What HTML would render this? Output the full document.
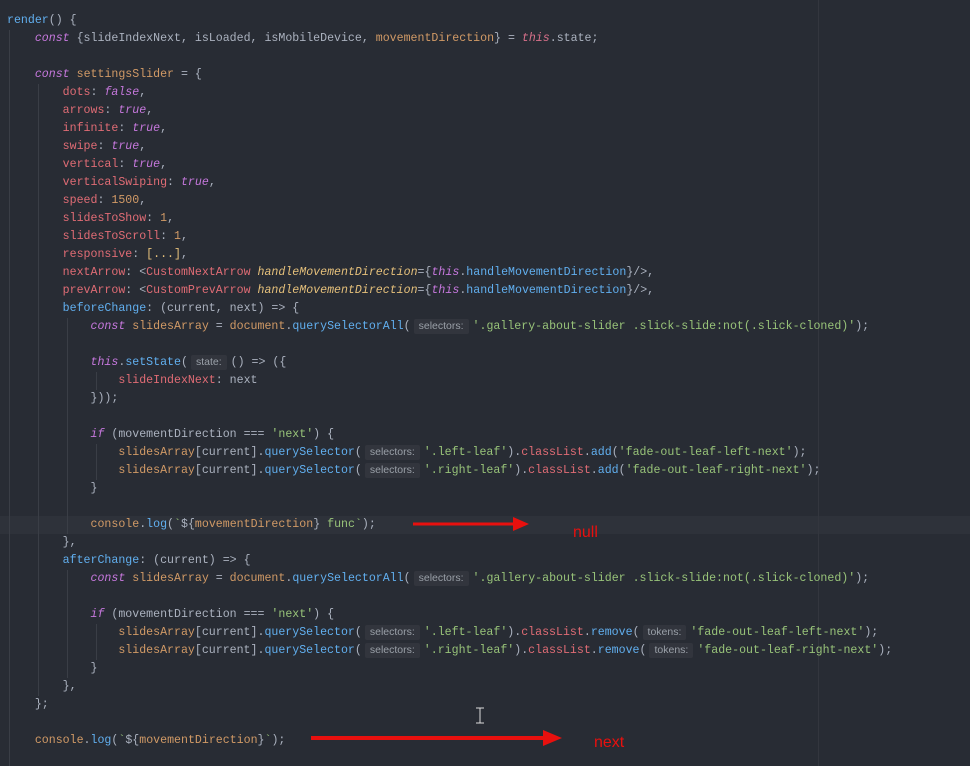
<!DOCTYPE html>
<html><head><meta charset="utf-8"><style>
html,body{margin:0;padding:0;}
body{width:970px;height:766px;background:#282c34;overflow:hidden;position:relative;font-family:"Liberation Mono",monospace;font-size:11.6px;color:#abb2bf;}
.l{position:absolute;left:7px;height:18px;line-height:18px;white-space:pre;}
.k{color:#c678dd;font-style:italic}
.p{color:#e06c75}
.v{color:#d19a66}
.f{color:#61afef}
.s{color:#98c379}
.n{color:#d19a66}
.y{color:#e5c07b}
.a{color:#e5c07b;font-style:italic}
.h{display:inline-block;font-family:"Liberation Sans",sans-serif;font-size:10.5px;color:#9aa0a8;background:#32353d;padding:0 5px;margin:0 4px 0 3px;line-height:15px;border-radius:2px;}
.g{position:absolute;width:1px;background:#3a3e46;}
</style></head><body>
<div style="position:absolute;left:0;top:516px;width:970px;height:18px;background:#2e323a"></div>
<div class="g" style="left:818px;top:0;height:766px;background:#33363e"></div>
<div class="g" style="left:9px;top:30px;height:736px"></div>
<div class="g" style="left:38px;top:84px;height:612px"></div>
<div class="g" style="left:67px;top:318px;height:216px"></div>
<div class="g" style="left:96px;top:372px;height:18px"></div>
<div class="g" style="left:96px;top:444px;height:36px"></div>
<div class="g" style="left:67px;top:570px;height:108px"></div>
<div class="g" style="left:96px;top:624px;height:36px"></div>

<div class="l" style="top:12px"><span class="f">render</span>() {</div>
<div class="l" style="top:30px">    <span class="k">const</span> {slideIndexNext, isLoaded, isMobileDevice, <span class="v">movementDirection</span>} = <span class="k" style="color:#d8708a">this</span>.state;</div>
<div class="l" style="top:66px">    <span class="k">const</span> <span class="v">settingsSlider</span> = {</div>
<div class="l" style="top:84px">        <span class="p">dots</span>: <span class="k">false</span>,</div>
<div class="l" style="top:102px">        <span class="p">arrows</span>: <span class="k">true</span>,</div>
<div class="l" style="top:120px">        <span class="p">infinite</span>: <span class="k">true</span>,</div>
<div class="l" style="top:138px">        <span class="p">swipe</span>: <span class="k">true</span>,</div>
<div class="l" style="top:156px">        <span class="p">vertical</span>: <span class="k">true</span>,</div>
<div class="l" style="top:174px">        <span class="p">verticalSwiping</span>: <span class="k">true</span>,</div>
<div class="l" style="top:192px">        <span class="p">speed</span>: <span class="n">1500</span>,</div>
<div class="l" style="top:210px">        <span class="p">slidesToShow</span>: <span class="n">1</span>,</div>
<div class="l" style="top:228px">        <span class="p">slidesToScroll</span>: <span class="n">1</span>,</div>
<div class="l" style="top:246px">        <span class="p">responsive</span>: <span class="y">[...]</span>,</div>
<div class="l" style="top:264px">        <span class="p">nextArrow</span>: &lt;<span class="p">CustomNextArrow</span> <span class="a">handleMovementDirection</span>={<span class="k">this</span>.<span class="f">handleMovementDirection</span>}/&gt;,</div>
<div class="l" style="top:282px">        <span class="p">prevArrow</span>: &lt;<span class="p">CustomPrevArrow</span> <span class="a">handleMovementDirection</span>={<span class="k">this</span>.<span class="f">handleMovementDirection</span>}/&gt;,</div>
<div class="l" style="top:300px">        <span class="f">beforeChange</span>: (current, next) =&gt; {</div>
<div class="l" style="top:318px">            <span class="k">const</span> <span class="v">slidesArray</span> = <span class="v">document</span>.<span class="f">querySelectorAll</span>(<span class="h">selectors:</span><span class="s">'.gallery-about-slider .slick-slide:not(.slick-cloned)'</span>);</div>
<div class="l" style="top:354px">            <span class="k">this</span>.<span class="f">setState</span>(<span class="h">state:</span>() =&gt; ({</div>
<div class="l" style="top:372px">                <span class="p">slideIndexNext</span>: next</div>
<div class="l" style="top:390px">            }));</div>
<div class="l" style="top:426px">            <span class="k">if</span> (movementDirection === <span class="s">'next'</span>) {</div>
<div class="l" style="top:444px">                <span class="v">slidesArray</span>[current].<span class="f">querySelector</span>(<span class="h">selectors:</span><span class="s">'.left-leaf'</span>).<span class="p">classList</span>.<span class="f">add</span>(<span class="s">'fade-out-leaf-left-next'</span>);</div>
<div class="l" style="top:462px">                <span class="v">slidesArray</span>[current].<span class="f">querySelector</span>(<span class="h">selectors:</span><span class="s">'.right-leaf'</span>).<span class="p">classList</span>.<span class="f">add</span>(<span class="s">'fade-out-leaf-right-next'</span>);</div>
<div class="l" style="top:480px">            }</div>
<div class="l" style="top:516px">            <span class="v">console</span>.<span class="f">log</span>(<span class="s">`</span>${<span class="v">movementDirection</span>}<span class="s"> func`</span>);</div>
<div class="l" style="top:534px">        },</div>
<div class="l" style="top:552px">        <span class="f">afterChange</span>: (current) =&gt; {</div>
<div class="l" style="top:570px">            <span class="k">const</span> <span class="v">slidesArray</span> = <span class="v">document</span>.<span class="f">querySelectorAll</span>(<span class="h">selectors:</span><span class="s">'.gallery-about-slider .slick-slide:not(.slick-cloned)'</span>);</div>
<div class="l" style="top:606px">            <span class="k">if</span> (movementDirection === <span class="s">'next'</span>) {</div>
<div class="l" style="top:624px">                <span class="v">slidesArray</span>[current].<span class="f">querySelector</span>(<span class="h">selectors:</span><span class="s">'.left-leaf'</span>).<span class="p">classList</span>.<span class="f">remove</span>(<span class="h">tokens:</span><span class="s">'fade-out-leaf-left-next'</span>);</div>
<div class="l" style="top:642px">                <span class="v">slidesArray</span>[current].<span class="f">querySelector</span>(<span class="h">selectors:</span><span class="s">'.right-leaf'</span>).<span class="p">classList</span>.<span class="f">remove</span>(<span class="h">tokens:</span><span class="s">'fade-out-leaf-right-next'</span>);</div>
<div class="l" style="top:660px">            }</div>
<div class="l" style="top:678px">        },</div>
<div class="l" style="top:696px">    };</div>
<div class="l" style="top:732px">    <span class="v">console</span>.<span class="f">log</span>(<span class="s">`</span>${<span class="v">movementDirection</span>}<span class="s">`</span>);</div>

<svg style="position:absolute;left:0;top:0" width="970" height="766">
<line x1="413" y1="524" x2="515" y2="524" stroke="#e8100e" stroke-width="3"/>
<polygon points="513,517 529,524 513,531" fill="#e8100e"/>
<line x1="311" y1="738" x2="545" y2="738" stroke="#e8100e" stroke-width="4"/>
<polygon points="543,730 562,738 543,746" fill="#e8100e"/>
<path d="M476 708h8M480 708v15M476 723h8" stroke="#ddd" stroke-width="1" fill="none"/>
<text x="573" y="537" fill="#e8100e" font-family="Liberation Sans, sans-serif" font-size="16">null</text>
<text x="594" y="747" fill="#e8100e" font-family="Liberation Sans, sans-serif" font-size="16">next</text>
</svg>
</body></html>
